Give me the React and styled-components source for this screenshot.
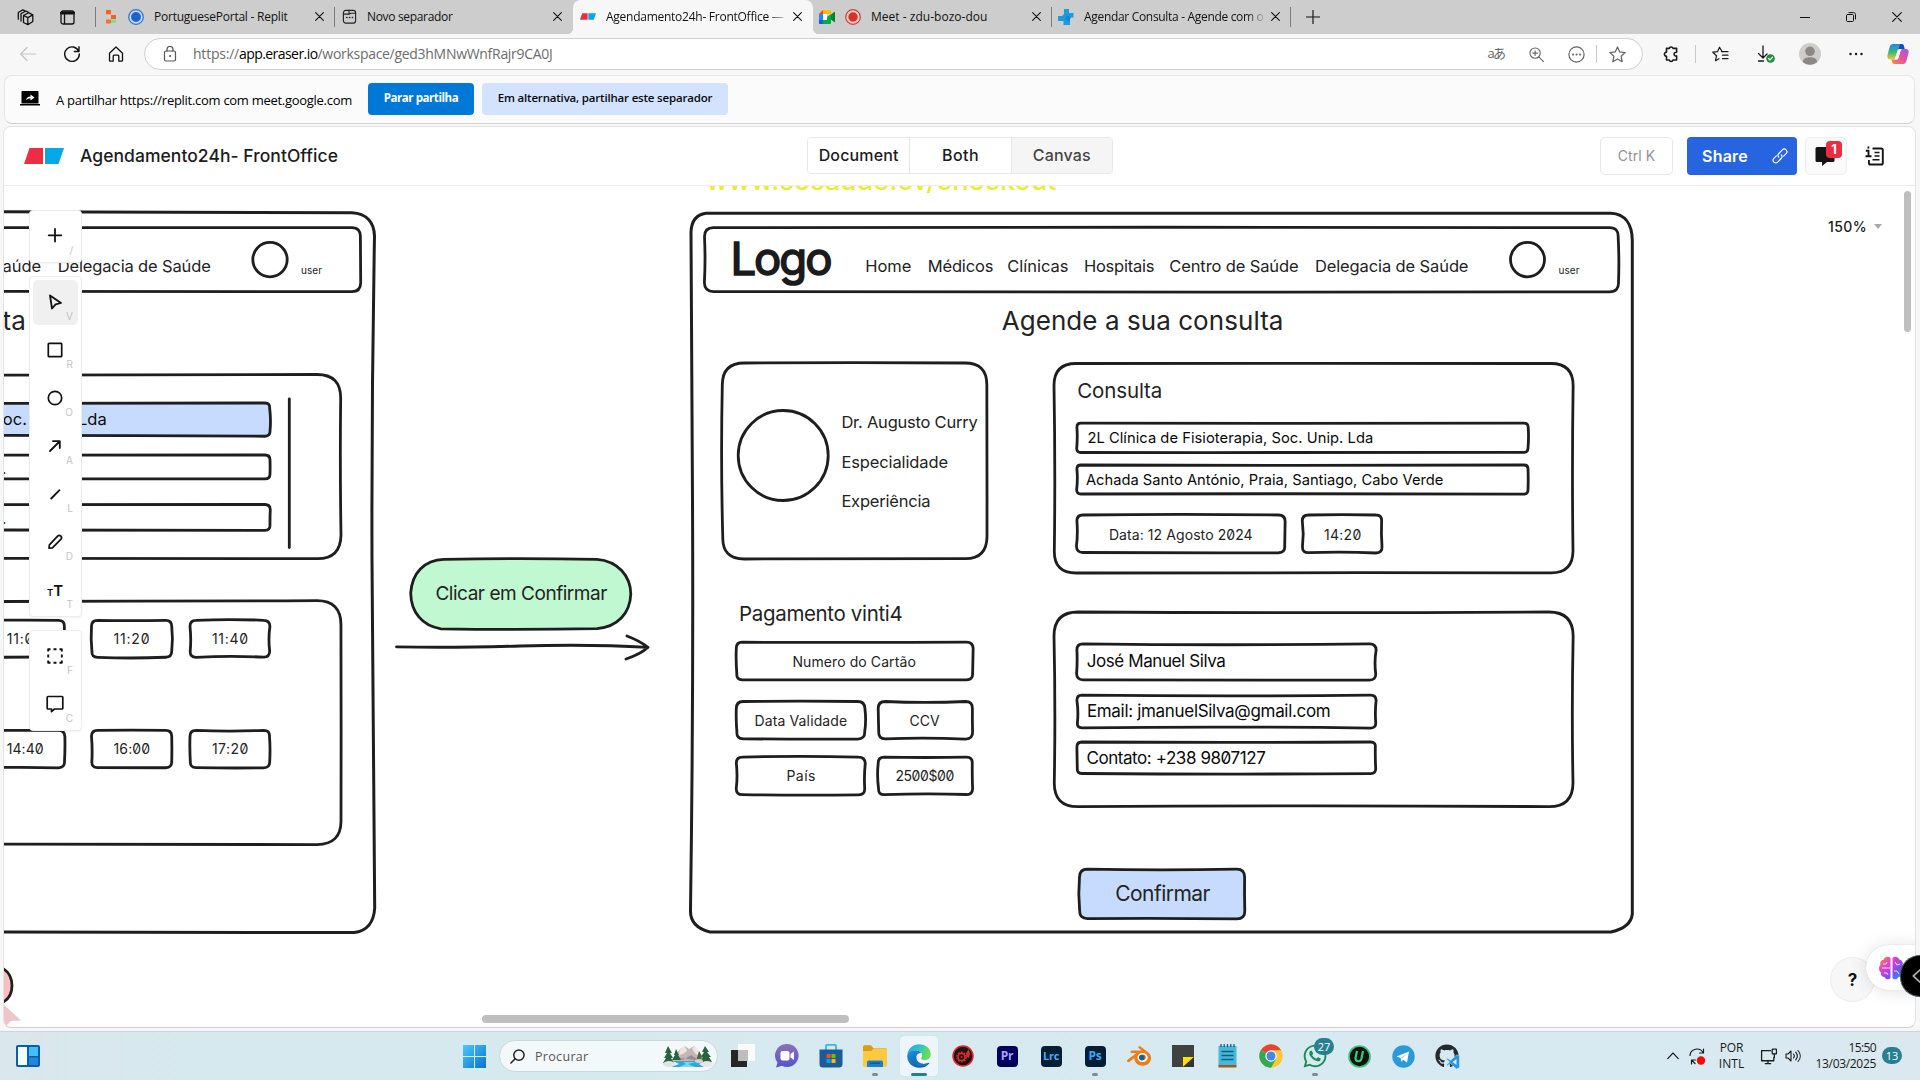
import React, { useLayoutEffect, useRef, useState } from "react";
import styled, { createGlobalStyle, css } from "styled-components";
import { FaWhatsapp, FaGithub } from "react-icons/fa";
import { SiBlender } from "react-icons/si";

const INK = "#1e1e1e";
const UI = `"Open Sans", "Noto Sans", sans-serif`;
const APP = `Inter, "Liberation Sans", sans-serif`;

const Global = createGlobalStyle`
  * { box-sizing: border-box; }
  html, body { margin: 0; padding: 0; }
  body { width: 1920px; height: 1080px; overflow: hidden; background: #f7f7f7; }
`;

/* ---------- text that tracks itself out to a given width ---------- */

const FitSpan = styled.span`
  display: inline-block;
  white-space: pre;
  flex: none;
`;

function Fit({ w, children, className }) {
  const ref = useRef(null);
  const [spacing, setSpacing] = useState(0);
  useLayoutEffect(() => {
    const el = ref.current;
    el.style.letterSpacing = "0px";
    const natural = el.getBoundingClientRect().width;
    setSpacing((w + 1.5 - natural) / String(children).length);
  }, [w, children]);
  return (
    <FitSpan ref={ref} className={className} style={{ letterSpacing: `${spacing}px` }}>
      {children}
    </FitSpan>
  );
}

/* ---------- window frame ---------- */

const Screen = styled.div`
  width: 1920px;
  height: 1080px;
  display: flex;
  flex-direction: column;
  background: #f7f7f7;
  font-family: ${UI};
  color: #111;
  overflow: hidden;
`;

const TabStrip = styled.div`
  height: 34px;
  flex: none;
  display: grid;
  grid-template-columns: 96px 239px 238px 240px 239px 239px 43px 1fr 140px;
  background: #cdcdcd;
`;

const edgeLine = css`
  &::after {
    content: "";
    position: absolute;
    right: 0;
    top: 7px;
    height: 20px;
    width: 1px;
    background: #7d7d7d;
  }
`;

const StripTools = styled.div`
  position: relative;
  display: flex;
  align-items: center;
  gap: 26px;
  padding-left: 17px;
  ${edgeLine}
`;

const Tab = styled.div`
  position: relative;
  display: flex;
  align-items: center;
  gap: 10px;
  padding: 0 10px 1px ${(p) => p.$pad || 6}px;
  font-size: 12px;
  color: #111;
  ${(p) => p.$lined && edgeLine}
  ${(p) =>
    p.$active &&
    css`
      background: #f7f7f7;
      border-radius: 8px 8px 0 0;
      &::before,
      &::after {
        content: "";
        position: absolute;
        bottom: 0;
        width: 6px;
        height: 6px;
      }
      &::before {
        left: -6px;
        background: radial-gradient(circle at 0 0, #cdcdcd 6px, #f7f7f7 6.5px);
      }
      &::after {
        right: -6px;
        background: radial-gradient(circle at 100% 0, #cdcdcd 6px, #f7f7f7 6.5px);
      }
    `}
`;

const TabTitle = styled.div`
  flex: 1;
  min-width: 0;
  margin-right: -5px;
  overflow: hidden;
  line-height: 18px;
  ${(p) => p.$fade && `mask-image: linear-gradient(90deg, #000 calc(100% - 18px), rgba(0, 0, 0, 0.15));`}
`;

const Centered = styled.div`
  display: flex;
  align-items: center;
  justify-content: center;
`;

const WindowButtons = styled.div`
  display: grid;
  grid-template-columns: repeat(3, 46px);
  place-items: center;
  margin-left: 2px;
`;

const AddressRow = styled.div`
  height: 41px;
  flex: none;
  display: flex;
  align-items: center;
  padding-left: 20px;
  padding-bottom: 1px;
`;

const NavButtons = styled.div`
  display: flex;
  gap: 28px;
  margin-right: 20px;
`;

const AddressField = styled.div`
  width: 1499px;
  height: 32px;
  display: flex;
  align-items: center;
  border: 1px solid #cfcfcf;
  border-radius: 16px;
  background: #fff;
  padding: 0 4px 0 18px;
  font-size: 14px;
`;

const Url = styled.div`
  flex: 1;
  display: flex;
  margin-left: 16px;
  color: #6c6c6c;
  line-height: 20px;
`;

const UrlHost = styled(Fit)`color: #000;`;

const Cell = styled.div`
  width: ${(p) => p.$w}px;
  padding-left: ${(p) => p.$pl || 0}px;
  flex: none;
  display: flex;
  align-items: center;
  justify-content: center;
  color: ${(p) => p.$c || "#1a1a1a"};
`;

const LangMark = styled.span`
  font: 13px/1 "Open Sans", "Noto Sans CJK JP", sans-serif;
  letter-spacing: -1.5px;
  margin-bottom: 2px;
`;

const Rule = styled.div`
  width: 1px;
  height: 18px;
  background: #c8c8c8;
`;

const ShareBar = styled.div`
  flex: none;
  height: 49px;
  margin: 0 5px 0 4px;
  display: flex;
  align-items: center;
  padding: 0 0 2px 15px;
  background: #fbfbfb;
  border: 1px solid #e6e6e6;
  border-bottom-color: #d2d2d2;
  border-radius: 8px;
  font-size: 13px;
  color: #000;
`;

const ShareMessage = styled(Fit)`margin: 2px 16px 0 16px;`;

const ShareButton = styled.button`
  width: ${(p) => p.$w}px;
  height: 32px;
  margin-right: 8px;
  padding: 0 0 2px;
  border: 0;
  border-radius: 4px;
  background: ${(p) => (p.$primary ? "#0078d7" : "#d3e2fd")};
  color: ${(p) => (p.$primary ? "#fff" : "#0a0a0a")};
  font: ${(p) => (p.$primary ? 700 : 600)} 11.5px ${UI};
`;

/* ---------- app card ---------- */

const AppCard = styled.main`
  flex: none;
  position: relative;
  height: 902px;
  margin: 2px 4px 0 3px;
  display: flex;
  flex-direction: column;
  background: #fff;
  border: 1px solid #e3e3e3;
  border-bottom-color: #d0d0d0;
  border-radius: 8px;
  overflow: hidden;
  font-family: ${APP};
`;

const AppHeader = styled.header`
  flex: none;
  height: 59px;
  padding-bottom: 1px;
  display: grid;
  grid-template-columns: 803px 306px 1fr;
  align-items: center;
  border-bottom: 1px solid #ececec;
`;

const Brand = styled.div`
  display: flex;
  align-items: center;
  gap: 16px;
  padding-left: 20px;
  font-size: 17.5px;
  font-weight: 450;
  color: #1c1c1c;
`;

const Segments = styled.div`
  display: grid;
  grid-template-columns: repeat(3, 1fr);
  height: 37px;
  border: 1px solid #e8e8e8;
  border-radius: 4px;
  overflow: hidden;
  font-size: 16px;
  font-weight: 500;
`;

const Segment = styled.div`
  display: flex;
  align-items: center;
  justify-content: center;
  padding-bottom: 1px;
  color: ${(p) => (p.$on ? "#444" : "#1c1c1c")};
  background: ${(p) => (p.$on ? "#f5f5f5" : "#fff")};
  & + & { border-left: 1px solid #e8e8e8; }
`;

const HeaderActions = styled.div`
  display: flex;
  align-items: center;
  justify-content: flex-end;
  padding-right: 14px;
`;

const KeyHint = styled.div`
  width: 73px;
  height: 38px;
  margin-right: 14px;
  padding-bottom: 1px;
  display: flex;
  align-items: center;
  justify-content: center;
  border: 1px solid #e8e8e8;
  border-radius: 5px;
  font-size: 14px;
  color: #929292;
`;

const ShareCta = styled.button`
  width: 110px;
  height: 38px;
  padding: 0 9px 0 15px;
  margin-right: 8px;
  display: flex;
  align-items: center;
  justify-content: space-between;
  border: 0;
  border-radius: 4px;
  background: #2765e0;
  color: #fff;
  font: 600 16px ${APP};
`;

const CommentButton = styled.div`
  position: relative;
  width: 42px;
  height: 38px;
  display: flex;
  align-items: center;
  padding-left: 9px;
  background: #fafafa;
  border: 1px solid #efefef;
  border-radius: 5px;
`;

const CommentBadge = styled.span`
  position: absolute;
  left: 20px;
  top: 3px;
  width: 16px;
  height: 17px;
  border-radius: 4px;
  background: #ee2b41;
  color: #fff;
  font-size: 13px;
  font-weight: 700;
  line-height: 17px;
  text-align: center;
`;

const NotesButton = styled.div`
  width: 54px;
  display: flex;
  justify-content: center;
`;

/* ---------- whiteboard ---------- */

const Board = styled.section`
  flex: 1;
  position: relative;
  overflow: hidden;
`;

/* Board coordinates are window coordinates; the plane is shifted to suit. */
const Plane = styled.div`
  position: absolute;
  left: -4px;
  top: -186px;
  width: 1920px;
  height: 1080px;
`;

const Ink = styled.svg`
  position: absolute;
  inset: 0;
  fill: none;
  stroke: ${INK};
  stroke-width: 2.8;
  stroke-linecap: round;
  stroke-linejoin: round;
`;

const LabelBox = styled.div`
  position: absolute;
  left: ${(p) => p.$x - 0.6}px;
  top: ${(p) => p.$y + 0.7 - p.$s * 0.864}px;
  line-height: 1;
  font-size: ${(p) => p.$s}px;
  font-weight: ${(p) => p.$b || 400};
  color: ${(p) => p.$c || "#232323"};
  font-feature-settings: "zero";
  ${(p) => p.$s > 40 && `-webkit-text-stroke: 1.6px currentColor;`}
`;

const Tools = styled.nav`
  position: absolute;
  left: 25px;
  top: 24px;
  display: flex;
  flex-direction: column;
  gap: 13px;
`;

const ToolGroup = styled.div`
  width: 53px;
  padding: 3px;
  display: flex;
  flex-direction: column;
  gap: 3px;
  background: #fff;
  border: 1px solid #ececec;
  border-radius: 4px;
  box-shadow: 0 1px 2px rgba(0, 0, 0, 0.05);
`;

const Tool = styled.div`
  position: relative;
  width: 45px;
  height: 45px;
  padding: 0 1px 1px 0;
  display: flex;
  align-items: center;
  justify-content: center;
  border-radius: 5px;
  background: ${(p) => (p.$on ? "#f0f0f0" : "#fff")};
`;

const ToolKey = styled.span`
  position: absolute;
  right: 5px;
  bottom: 3px;
  font-size: 10px;
  color: #c4c4c4;
`;

const ZoomLevel = styled.div`
  position: absolute;
  right: 33px;
  top: 32px;
  display: flex;
  align-items: center;
  gap: 7px;
  font-size: 14px;
  font-weight: 500;
  color: #1a1a1a;
`;

const Caret = styled.span`
  border: 4.5px solid transparent;
  border-top: 5px solid #a9a9a9;
  border-bottom: 0;
`;

const ScrollThumb = styled.div`
  position: absolute;
  border-radius: 4px;
  background: #bfbfbf;
  ${(p) =>
    p.$vertical
      ? css`right: 4px; top: 5px; width: 7px; height: 141px;`
      : css`left: 478px; bottom: 4px; width: 367px; height: 8px;`}
`;

const HelpButton = styled.div`
  position: absolute;
  right: 40px;
  bottom: 25px;
  width: 45px;
  height: 45px;
  display: flex;
  align-items: center;
  justify-content: center;
  border: 1px solid #ececec;
  border-radius: 50%;
  background: #f7f7f7;
  font-size: 17px;
  font-weight: 700;
  color: #111;
`;

const SideWidget = styled.div`
  position: absolute;
  right: -21px;
  bottom: 37px;
  width: 70px;
  height: 45px;
  padding-left: 13px;
  display: flex;
  align-items: center;
  border-radius: 23px;
  background: #fff;
  box-shadow: 0 1px 18px rgba(0, 0, 0, 0.12), 0 0 1px rgba(0, 0, 0, 0.2);
`;

const SideHandle = styled.div`
  position: absolute;
  z-index: 2;
  left: 1900px;
  top: 955px;
  width: 20px;
  height: 42px;
  display: flex;
  align-items: center;
  padding-left: 11px;
  border-radius: 21px 0 0 21px;
  border: 1px solid #44535a;
  border-right: 0;
  background: #000;
`;

/* ---------- taskbar ---------- */

const Taskbar = styled.footer`
  height: 49px;
  margin-top: auto;
  flex: none;
  display: flex;
  align-items: center;
  border-top: 1px solid #c9d7dc;
  background: linear-gradient(90deg, #dae7ec 0, #d5e9ef 12%, #d7eaf1 85%, #dbe8f0 100%);
`;

const WidgetSlot = styled.div`
  width: 452px;
  padding-left: 16px;
  display: flex;
`;

const SearchBox = styled.div`
  width: 219px;
  height: 32px;
  margin: 0 3px;
  padding: 0 4px 0 10px;
  display: flex;
  align-items: center;
  gap: 10px;
  border: 1px solid #c9d9df;
  border-radius: 16px;
  background: #f3f9fb;
  font-size: 12.5px;
  color: #555;
`;

const SearchText = styled.div`flex: 1;`;

const TaskCell = styled.div`
  position: relative;
  width: 44px;
  height: 40px;
  display: flex;
  align-items: center;
  justify-content: center;
  &::before {
    content: "";
    position: absolute;
    z-index: 0;
    inset: 0 3px;
    border-radius: 4px;
    background: ${(p) => (p.$active ? "#edf5fb" : "transparent")};
    box-shadow: ${(p) => (p.$active ? "0 0 1px #9db" : "none")};
  }
  & > svg { position: relative; }
  &::after {
    content: "";
    position: absolute;
    bottom: 0.5px;
    width: ${(p) => (p.$active ? 16 : p.$open ? 6 : 0)}px;
    height: 3px;
    border-radius: 2px;
    background: ${(p) => (p.$active ? "#23808f" : "#838b90")};
  }
`;

const CountBadge = styled.span`
  position: absolute;
  left: 21px;
  top: 2px;
  min-width: 20px;
  height: 17px;
  border-radius: 9px;
  background: #277f90;
  color: #fff;
  font-size: 11px;
  line-height: 17px;
  text-align: center;
`;

const AdobeTile = styled.div`
  width: 21px;
  height: 21px;
  border-radius: 4px;
  background: ${(p) => p.$bg};
  color: ${(p) => p.$c};
  font: 700 ${(p) => p.$s || 12}px/20px ${UI};
  text-align: center;
  letter-spacing: -0.3px;
`;

const Tray = styled.div`
  margin-left: auto;
  padding-right: 18px;
  display: flex;
  align-items: center;
  font-size: 12px;
  color: #1a1a1a;
`;

const TwoLine = styled.div`
  width: ${(p) => p.$w}px;
  display: flex;
  flex-direction: column;
  align-items: ${(p) => p.$align};
  line-height: 16px;
`;

const DayBadge = styled.div`
  width: 20px;
  height: 17px;
  margin: 0 0 1px 6px;
  border-radius: 9px;
  background: #277f90;
  color: #fff;
  font-size: 11px;
  line-height: 17px;
  text-align: center;
`;

/* ---------- icons ---------- */

function Glyph({ s = 16, h, vb, sw = 1.2, fill = "none", stroke = "currentColor", children }) {
  return (
    <svg
      width={s}
      height={h || s}
      viewBox={vb || "0 0 16 16"}
      fill={fill}
      stroke={stroke}
      strokeWidth={sw}
      strokeLinecap="round"
      strokeLinejoin="round"
    >
      {children}
    </svg>
  );
}

const Cross = ({ s = 9 }) => (
  <Glyph s={s} vb="0 0 10 10" sw={1.2} stroke="#111"><path d="M.7.7l8.6 8.6M9.3.7L.7 9.3" /></Glyph>
);

const EraserMark = ({ w, h }) => (
  <svg width={w} height={h} viewBox="0 0 40 16">
    <path d="M5.5 0H19v16H0z" fill="#ee2c43" />
    <path d="M21 0h19l-5.5 16H21z" fill="#04a8e6" />
  </svg>
);

const Mountain = () => (
  <svg width="50" height="24" viewBox="0 0 50 24">
    <path d="M8 18l9-13 5-3 4 3 5-3 12 15z" fill="#c5b5b4" />
    <path d="M17 5l5-3 2 5-4 3-4 1zM29 4l3-2 6 8-4 1-3-3z" fill="#eee5e3" />
    <path d="M12 13l8 3 8-5 9 6z" fill="#9a8c95" />
    <path d="M10 17h32l-6 3 5 3H8l8-3z" fill="#2da9d3" />
    <path d="M20 18h13l-8 2 7 3H16l7-3z" fill="#7cd7ec" />
    <path d="M5 2l4 7H7l3 5H8l3 5H0l3-5H1l3-5H2zM13 5l3 6h-1l3 5H9l3-5h-1z" fill="#28633f" />
    <path d="M42 2l4 6h-2l4 5h-2l3 5H37l3-5h-2l3-5h-2z" fill="#28633f" />
    <path d="M36 7l3 5-1 5h-5zM4 17h2v3H4zM42 17h2v3h-2z" fill="#4d6a3d" />
    <ellipse cx="6" cy="20" rx="6" ry="3" fill="#e1e2e2" />
    <ellipse cx="44" cy="20" rx="6" ry="3" fill="#e8e6e5" />
    <ellipse cx="36" cy="17" rx="4" ry="2" fill="#d3d0d3" />
  </svg>
);

const EdgeLogo = () => (
  <svg width="24" height="24" viewBox="0 0 24 24">
    <defs>
      <linearGradient id="edgeA" x1="0" y1="0" x2="1" y2=".3"><stop offset="0" stopColor="#2ba8df" /><stop offset=".55" stopColor="#31c4c1" /><stop offset="1" stopColor="#69df4f" /></linearGradient>
      <linearGradient id="edgeB" x1="0" y1="0" x2="1" y2="1"><stop offset="0" stopColor="#2194dd" /><stop offset="1" stopColor="#0a4a9c" /></linearGradient>
    </defs>
    <path d="M.3 11C1 4.5 6 .3 12 .3c7 0 11.700 5 11.700 9.700 0 4-3 6-6 6-2.500 0-3.900-.9-3.600-1.500.5-.9 1-1.400 1-2.900 0-3-3-5.300-6.500-5.300C4.500 6.300 1.500 8.500.3 11z" fill="url(#edgeA)" />
    <path d="M.3 11.500C1 8 5 6.100 8.700 6.300c2.500.2 4.500 1.200 5.500 2.700-1-.3-4.200.3-4.900 3.500-.8 4 3 7.500 7.500 7.500 2.200 0 3.800-.6 5-1.200.4-.2.7.2.4.6C20 22.200 16.500 23.700 12.300 23.700 5 23.700-.3 18 .3 11.500z" fill="url(#edgeB)" />
    <path d="M9.300 12.500c-.8 4 3 7.500 7.500 7.500 2.200 0 3.800-.6 5-1.200-4 4.500-9.500 4.800-12.500 1.700-3-3-2-7 0-8z" fill="#1575c9" />
  </svg>
);

const ChromeLogo = () => (
  <svg width="24" height="24" viewBox="0 0 24 24">
    <circle cx="12" cy="12" r="11.700" fill="#fcc934" />
    <path d="M12 12L1.900 6.100A11.700 11.700 0 0 1 22.100 6.200H12z" fill="#ea4335" />
    <path d="M1.900 6.100A11.700 11.700 0 0 0 12 23.700l5-8.800L12 12z" fill="#34a853" />
    <circle cx="12" cy="12" r="5.700" fill="#fff" />
    <circle cx="12" cy="12" r="4.500" fill="#4285f4" />
  </svg>
);

const CopilotLogo = () => (
  <svg width="22" height="20" viewBox="0 0 22 20">
    <defs>
      <linearGradient id="copA" x1="0" y1="0" x2="0" y2="1"><stop offset="0" stopColor="#1f8de8" /><stop offset=".5" stopColor="#36b37e" /><stop offset="1" stopColor="#f6c928" /></linearGradient>
      <linearGradient id="copB" x1="1" y1="0" x2="0" y2="1"><stop offset="0" stopColor="#9a5bf0" /><stop offset=".5" stopColor="#e8529b" /><stop offset="1" stopColor="#fd8d3c" /></linearGradient>
    </defs>
    <path d="M6 0h8.500c1.500 0 2 .8 2.500 2.500L17.500 5H13c-1.500 0-2 .6-2.500 2L8.500 13c-.6 1.600-1 2.500-2.600 2.500H3.500C1 15.500 0 14 .5 11L2.500 3.500C3.100 1 4 0 6 0z" fill="url(#copA)" />
    <path d="M13 0h1.500c1.500 0 2 .8 2.500 2.500l.6 2.700H13c-.5 0-1.400.3-1.800.8z" fill="#1748c9" />
    <path d="M16 20H7.500C6 20 5.500 19.200 5 17.500l-.6-2H9c1.500 0 2-.6 2.500-2l2-6.500c.6-1.600 1-2 2.600-2h2.400c2.500 0 3.500 1 3 4l-2 7.500C18.900 19 18 20 16 20z" fill="url(#copB)" />
    <path d="M10.500 7l-2 6.300c-.3.900-.6 1.700-1.200 2.200H9c1.500 0 2-.6 2.500-2L13.300 7.500c.4-1.200.8-2 1.500-2.400H13c-1.500 0-2 .5-2.500 1.900z" fill="#fff" />
  </svg>
);

const MeetLogo = () => (
  <svg width="16" height="14" viewBox="0 0 16 14">
    <path d="M0 4l4-4v4z" fill="#ea4335" />
    <path d="M4 0h7c.8 0 1 .3 1 1v3H4z" fill="#fbbc04" />
    <path d="M0 4h4v6H0z" fill="#2684fc" />
    <path d="M0 10h4v4H1c-.7 0-1-.3-1-1z" fill="#0066da" />
    <path d="M4 10h4V7l4-3v9c0 .7-.3 1-1 1H4z" fill="#00ac47" />
    <path d="M12 4.500L15.200 2c.5-.3.800-.1.800.4v9.200c0 .5-.3.700-.8.4L12 9.500z" fill="#00832d" />
    <path d="M4 4h4v6H4z" fill="#fff" />
  </svg>
);

const TOOL_ICONS = {
  plus: <Glyph s={16} sw={1.8}><path d="M8 1v12.600M1.700 7.300h12.600" /></Glyph>,
  select: <Glyph s={16} sw={1.8}><path d="M3 1.500l11 7.500-5.400 1.400L5 14.500z" /></Glyph>,
  rect: <Glyph s={16} sw={1.7}><rect x="1.300" y="1.300" width="13.400" height="13.400" rx=".8" /></Glyph>,
  ellipse: <Glyph s={16} sw={1.7}><circle cx="8" cy="8" r="6.700" /></Glyph>,
  arrow: <Glyph s={16} sw={1.8}><path d="M3 13l9.500-9.500M6 3.200h6.800V10" /></Glyph>,
  line: <Glyph s={16} sw={1.8}><path d="M4.200 12.500l8.300-8.300" /></Glyph>,
  draw: <Glyph s={16} sw={1.7}><path d="M2 14.200l.4-3.400 8.200-8.600a2.200 2.200 0 0 1 3.200 3.200l-8.400 8.400z" /></Glyph>,
  frame: <Glyph s={16} sw={1.9}><path d="M1.200 3.500V1.200h2.300M6.500 1.200h3M12.500 1.200h2.300v2.300M14.800 6.500v3M14.800 12.500v2.300h-2.300M9.500 14.800h-3M3.500 14.800H1.200v-2.300M1.200 9.500v-3" strokeLinecap="butt" /></Glyph>,
  comment: <Glyph s={18} vb="0 0 18 18" sw={1.7}><path d="M2 1.500h14c.5 0 .8.300.8.800v10.900c0 .5-.3.800-.8.800H8.500L5.500 16.700V14H2c-.5 0-.8-.3-.8-.8V2.300c0-.5.300-.8.8-.8z" /></Glyph>,
};

const TextIcon = styled.span`
  font: 600 ${(p) => p.$s}px/1 ${APP};
  color: #111;
`;
const TextTool = styled.span`
  display: flex;
  align-items: baseline;
`;

const TOOL_GROUPS = [
  [["plus", "/"]],
  [["select", "V"], ["rect", "R"], ["ellipse", "O"], ["arrow", "A"], ["line", "L"], ["draw", "D"], ["text", "T"]],
  [["frame", "F"], ["comment", "C"]],
];

/* ---------- sketch outlines ---------- */

const jitter = (seed, k) => {
  const v = Math.sin(seed * 12.9898 + k * 78.233) * 43758.5453;
  return (v - Math.floor(v)) * 2 - 1;
};

function sketchRect([x1, y1, x2, y2, r, amp = 1.2]) {
  const seed = x1 + y1 * 1.7;
  const mx = (x1 + x2) / 2;
  const my = (y1 + y2) / 2;
  const j = (k) => jitter(seed, k) * amp;
  return [
    `M${x1 + r} ${y1}`,
    `Q${mx} ${y1 + j(1) * 1.6} ${x2 - r} ${y1}`,
    `Q${x2} ${y1} ${x2 + j(2) * 0.5} ${y1 + r}`,
    `Q${x2 + j(3) * 1.5} ${my} ${x2} ${y2 - r}`,
    `Q${x2 + j(4) * 0.4} ${y2} ${x2 - r} ${y2 + j(4) * 0.3}`,
    `Q${mx} ${y2 + j(5) * 1.6} ${x1 + r} ${y2}`,
    `Q${x1} ${y2} ${x1 + j(6) * 0.5} ${y2 - r}`,
    `Q${x1 + j(7) * 1.5} ${my} ${x1} ${y1 + r}`,
    `Q${x1} ${y1} ${x1 + r} ${y1}Z`,
  ].join("");
}

/* The two big frames bow inwards along their long sides. */
const LEFT_FRAME = "M-100 211.500L352 212.700C366 213.500 374 222 374.500 236Q371.500 400 372 560T374.700 908C374 922 367 931 354 932.500L-100 932";
const RIGHT_FRAME =
  "M706 213.300L1611 213.300C1625 214 1632 224 1632.300 240Q1631.500 570 1632.300 914C1631 926 1620 930 1611 932L710 932C698 929 690 922 690.500 910Q693.500 700 692.500 500T691 232C691.500 220 697 214.500 706 213.300Z";

const BLUE = "#c6dbfd";

const SHAPES = [
  { r: [-580, 227.7, 360.7, 291.7, 9, 0.8] },
  { r: [-400, 374.5, 341, 559, 24, 1] },
  { r: [-300, 403, 270, 436, 5, 1], fill: BLUE },
  { r: [-300, 455, 270, 479, 5, 0.4] },
  { r: [-300, 504.5, 270, 530.3, 5, 0.7] },
  { r: [-400, 600.7, 341, 844.3, 24, 1] },
  { r: [-15, 620.3, 64.5, 657.3, 6] },
  { r: [91.5, 620.3, 171.7, 657.3, 6] },
  { r: [190, 620.3, 269.700, 657.3, 6] },
  { r: [-15, 730.3, 64.5, 767.6, 6] },
  { r: [91.5, 730.3, 171.7, 767.6, 6] },
  { r: [190, 730.3, 269.700, 767.6, 6] },
  { r: [704.5, 227.6, 1618.5, 291.6, 9, 0.8] },
  { r: [722.3, 363, 987, 559, 22] },
  { r: [1054, 363.5, 1573, 573, 22] },
  { r: [1076.9, 423.2, 1528, 452.5, 4, 1] },
  { r: [1076.9, 465, 1528, 494, 4, 1] },
  { r: [1076.9, 515, 1284.700, 552.5, 6] },
  { r: [1302.3, 515, 1382, 552.7, 6] },
  { r: [736.3, 642.2, 972.6, 679.8, 6] },
  { r: [736.3, 701.5, 864.700, 738.8, 7] },
  { r: [878.2, 701.5, 972.6, 738.8, 7] },
  { r: [736.3, 757.2, 864.700, 794.7, 6] },
  { r: [878.2, 757.2, 972.6, 794.7, 6] },
  { r: [1054, 612, 1573, 806.7, 24, 1.4] },
  { r: [1076.9, 643.8, 1375.700, 679.8, 6] },
  { r: [1076.9, 695.2, 1375.700, 727.8, 5] },
  { r: [1076.9, 742, 1375.700, 773.5, 5] },
  { r: [1079.5, 869.2, 1244.8, 918.6, 8, 1], fill: BLUE },
];

/* x, baseline, ink width, size, text, weight, colour */
const LABELS = [
  [706.5, 189.2, 349, 27, "www.sosaude.cv/checkout", 500, "#ecec2c"],
  [-87.7, 271.3, 127.7, 16.5, "Centro de Saúde"],
  [58.3, 271.3, 151.5, 16.5, "Delegacia de Saúde"],
  [301.5, 273, 19.8, 10, "user"],
  [-255, 329.3, 280, 26, "Agende a sua consulta"],
  [-215, 425, 321, 16.5, "2L Clínica de Fisioterapia, Soc. Unip. Lda", 400, "#0c0c0c"],
  [-80, 473, 84, 15, "Soc. Unip. Lda."],
  [-80, 523, 84, 15, "Soc. Unip. Lda."],
  [7.3, 643, 35.5, 14, "11:00"],
  [114, 643, 35.5, 14, "11:20"],
  [212.5, 643, 35.5, 14, "11:40"],
  [7.3, 753.3, 35.5, 14, "14:40"],
  [114, 753.3, 35.5, 14, "16:00"],
  [212.5, 753.3, 35.5, 14, "17:20"],
  [436, 600, 170, 19, "Clicar em Confirmar"],
  [731, 275, 98.5, 45.5, "Logo", 400, "#1b1b1b"],
  [865.8, 271.3, 44.7, 16.5, "Home"],
  [928.3, 271.3, 64, 16.5, "Médicos"],
  [1007.8, 271.3, 59.7, 16.5, "Clínicas"],
  [1084.5, 271.3, 68.8, 16.5, "Hospitais"],
  [1169.9, 271.3, 127.7, 16.5, "Centro de Saúde"],
  [1315.5, 271.3, 152, 16.5, "Delegacia de Saúde"],
  [1559, 273, 19.8, 10, "user"],
  [1002.3, 329.5, 280.3, 26, "Agende a sua consulta"],
  [842, 427.3, 134.6, 16.5, "Dr. Augusto Curry"],
  [842, 467.5, 105, 16.5, "Especialidade"],
  [842, 507, 87.5, 16.5, "Experiência"],
  [1077.8, 398, 83.4, 20.5, "Consulta"],
  [1088, 443, 284.4, 14.7, "2L Clínica de Fisioterapia, Soc. Unip. Lda", 400, "#080808"],
  [1086.5, 484.7, 356, 14.7, "Achada Santo António, Praia, Santiago, Cabo Verde", 400, "#080808"],
  [1109.5, 539, 142.3, 14, "Data: 12 Agosto 2024"],
  [1324.6, 539, 36, 14, "14:20"],
  [739.7, 621, 161.7, 20.5, "Pagamento vinti4"],
  [793, 666, 122, 14, "Numero do Cartão"],
  [755, 725.2, 91.5, 14, "Data Validade"],
  [910, 725.2, 29, 14, "CCV"],
  [787, 780.7, 28, 14, "País"],
  [896, 780.7, 57, 14, "2500$00"],
  [1087.3, 666.7, 137.2, 17, "José Manuel Silva", 400, "#0a0a0a"],
  [1087.5, 717, 242, 17, "Email: jmanuelSilva@gmail.com", 400, "#0a0a0a"],
  [1087, 764, 177.5, 17, "Contato: +238 9807127", 400, "#0a0a0a"],
  [1115.8, 900.6, 93.2, 21, "Confirmar"],
];

function Whiteboard() {
  return (
    <Plane>
      <Ink viewBox="0 0 1920 1080" width="1920" height="1080">
        <path d={LEFT_FRAME} strokeWidth="3" />
        <path d={RIGHT_FRAME} strokeWidth="3" />
        {SHAPES.map((s, i) => <path key={i} d={sketchRect(s.r)} fill={s.fill || "none"} />)}
        <circle cx="270" cy="259.600" r="17.200" />
        <ellipse cx="1527.500" cy="259.600" rx="17" ry="17.200" />
        <circle cx="783.200" cy="455.500" r="45" />
        <path d="M289.300 399v148.500" />
        <path
          d="M444 559.300Q520 558 597 559.300C618 561 630.500 576 630.800 594C630 613 618 627 597 628.600Q520 630 441 628.800C422 626 411 612 410.700 593C412 573 424 560 444 559.300Z"
          fill="#c0f8d1"
        />
        <path d="M396.500 646.800Q450 648 520 646T648 647.300M627 636Q640 641 648 647.300Q641 654 626 659" />
        <path d="M-30 962C0 962 12 970 12 985.700S0 1008 -30 1008" fill="#f9bfc0" />
        <path d="M1 1002L21 1020.500 11 1021 4 1028Z" fill="#efc6c8" stroke="none" />
      </Ink>
      {LABELS.map(([x, y, w, s, t, b, c], i) => (
        <LabelBox key={i} $x={x} $y={y} $s={s} $b={b} $c={c}>
          <Fit w={w}>{t}</Fit>
        </LabelBox>
      ))}
    </Plane>
  );
}

/* ---------- page ---------- */

const TASKS = [
  { icon: <svg width="24" height="24" viewBox="0 0 24 24"><path d="M0 6h16v17H0z" fill="#262626" /><path d="M7 0h17v17H7z" fill="#fafafa" /><path d="M7 6h10v11H7z" fill="#bdbdbd" /></svg> },
  { icon: <svg width="24" height="24" viewBox="0 0 24 24"><defs><linearGradient id="tm" x2="0" y2="1"><stop stopColor="#8f6fb8" /><stop offset="1" stopColor="#5355cc" /></linearGradient></defs><path d="M12 0a11.500 11.500 0 1 1-5 21.800L1 23.500l1.500-5A11.500 11.500 0 0 1 12 0z" fill="url(#tm)" /><rect x="5.500" y="7" width="9" height="9.500" rx="2" fill="#fff" /><path d="M15.500 10l3.500-2.500v8.500l-3.500-2.500z" fill="#fff" /></svg> },
  { icon: <svg width="24" height="24" viewBox="0 0 24 24"><path d="M7 6V2c0-.8.400-1.200 1.200-1.200h7.600c.8 0 1.200.4 1.200 1.200v4" fill="none" stroke="#35b7ee" strokeWidth="1.800" /><path d="M.5 5.500h23V20c0 2.500-1 3.500-3.500 3.500H4C1.500 23.500.5 22.500.5 20z" fill="#1b5c96" /><path d="M7.500 10h4v4h-4z" fill="#f25022" /><path d="M12.500 10h4v4h-4z" fill="#7fba00" /><path d="M7.500 15h4v4h-4z" fill="#00a4ef" /><path d="M12.500 15h4v4h-4z" fill="#ffb900" /></svg> },
  { open: true, icon: <svg width="24" height="23" viewBox="0 0 24 23"><path d="M0 2C0 .8.700.2 1.700.2H8l2.500 3H22c1.300 0 2 .6 2 2V10H0z" fill="#dd9b12" /><path d="M0 6h8l3-2.500h11c1.300 0 2 .7 2 2V20c0 1.200-.8 2-2 2H2c-1.200 0-2-.8-2-2z" fill="#fcca40" /><path d="M4 22v-4.500c0-1.300.7-2 2-2h12c1.300 0 2 .7 2 2V22z" fill="#1b7fd0" /><path d="M7.500 18.300h9" stroke="#0c5ba0" strokeWidth="1.600" strokeLinecap="round" /></svg> },
  { active: true, icon: <EdgeLogo /> },
  { icon: <svg width="22" height="22" viewBox="0 0 22 22"><circle cx="11" cy="11" r="10" fill="#161616" stroke="#e4262b" strokeWidth="1.500" /><circle cx="9.500" cy="12" r="4.600" fill="none" stroke="#e4262b" strokeWidth="1.600" strokeDasharray="1.900 1" /><circle cx="9.500" cy="12" r="3.400" fill="none" stroke="#e4262b" strokeWidth="1.500" /><circle cx="9.500" cy="12" r="1" fill="#e4262b" /><path d="M14 8.500l2.500-4.500 1.500 4.500-1 4.500-2-1z" fill="#e4262b" /></svg> },
  { icon: <AdobeTile $bg="#00005c" $c="#a5a0ff">Pr</AdobeTile> },
  { icon: <AdobeTile $bg="#041e34" $c="#4babf5" $s={11}>Lrc</AdobeTile> },
  { open: true, icon: <AdobeTile $bg="#041e34" $c="#35a9fb">Ps</AdobeTile> },
  { icon: <svg width="24" height="24" viewBox="0 0 24 24"><circle cx="15" cy="13.800" r="6" fill="#fff" /><SiBlender size={24} color="#ea7f1a" /><circle cx="14.800" cy="13.600" r="2.800" fill="#1e5a95" /></svg> },
  { icon: <svg width="22" height="22" viewBox="0 0 22 22"><path d="M0 0h22v12l-9 10H0z" fill="#414141" /><path d="M11 22V12h11z" fill="#ffe000" /><path d="M22 12v10H11z" fill="#333" /></svg> },
  { icon: <svg width="19" height="24" viewBox="0 0 19 24"><path d="M.5 2h18v20h-18z" fill="#45b9da" /><path d="M.5 21h18v2.500h-18z" fill="#a65a18" /><path d="M3 0v3M6.200 0v3M9.500 0v3M12.800 0v3M16 0v3" stroke="#27566a" strokeWidth="1.300" /><path d="M3.500 7.500h12M3.500 11.500h12M3.500 15.500h12" stroke="#155a7c" strokeWidth="1.500" /></svg> },
  { icon: <ChromeLogo /> },
  { open: true, badge: "27", icon: <FaWhatsapp size={26} color="#1f8a58" /> },
  { icon: <svg width="23" height="23" viewBox="0 0 23 23"><circle cx="11.500" cy="11.500" r="10.500" fill="#0e1410" stroke="#3ec47a" strokeWidth="1.700" /><path d="M9 6l-1.500 7c-.5 4 5 4.500 6 .5L15 6" fill="none" stroke="#43c67c" strokeWidth="2.200" /></svg> },
  { icon: <svg width="23" height="23" viewBox="0 0 23 23"><circle cx="11.500" cy="11.500" r="11.200" fill="#2a9bd8" /><path d="M4.500 11.500l12.500-5-2 11-3.800-2.800-2 2-.5-3.700z" fill="#fff" /><path d="M8.700 13l6-4.500-4.200 5z" fill="#a9cfe6" /></svg> },
  { icon: <svg width="25" height="25" viewBox="0 0 25 25"><FaGithub size={24} color="#24292e" /><path d="M24.500 11.500v12l-3 1.500-6-5.500-3 2.300-1-.8 3-3-3-3 1-.8 3 2.300 6-5.500z" fill="#2496e3" stroke="#d7eaf1" strokeWidth=".5" /><path d="M21.500 15v6l-4-3z" fill="#d7eaf1" /></svg> },
];

export default function App() {
  return (
    <Screen>
      <Global />
      <TabStrip>
        <StripTools>
          <Glyph s={17} sw={1.3} stroke="#111" vb="0 0 17 17"><path d="M6.500 6.500l5-2.800 4.300 2.200v6.600l-5 3.200-4.300-2.200zM6.500 6.500l4.300 2.100v7.100M10.800 8.600l5-2.700M4 12V4.800L8.800 2l2 .9M1.300 10.200V3.500L5.800.9l1.700.7" /></Glyph>
          <Glyph s={15} sw={1.3} stroke="#111" vb="0 0 15 15"><rect x="1" y="1" width="13" height="13" rx="2" /><path d="M1.500 3h12" strokeWidth="3" /><path d="M4.500 3v10.500" /></Glyph>
        </StripTools>
        <Tab $lined $pad={9}>
          <svg width="13" height="14" viewBox="0 0 13 14"><path d="M1 0h5v4.200H1zM6 5h5v4H6z" fill="#f0641e" /><path d="M1 9.500h5v4H1z" fill="#f0742e" /><path d="M6 9.500h5v3.500H6z" fill="#7fdc9a" /></svg>
          <svg width="16" height="16" viewBox="0 0 16 16"><circle cx="8" cy="8" r="7.300" fill="#cdd9ee" stroke="#2a6fd2" strokeWidth="1.200" /><circle cx="8" cy="8" r="4.900" fill="#1b63d0" /></svg>
          <TabTitle><Fit w={132}>PortuguesePortal - Replit</Fit></TabTitle>
          <Cell $w={12}><Cross /></Cell>
        </Tab>
        <Tab $pad={7}>
          <Glyph s={15} sw={1.2} stroke="#222"><rect x="1.500" y="1.500" width="13" height="13.500" rx="2.500" /><path d="M1.500 5.500h6l2-1h5M7.500 1.500v4" /><path d="M5 9h.2M8 9h.2M11 9h.2" strokeWidth="1.700" /></Glyph>
          <TabTitle><Fit w={84}>Novo separador</Fit></TabTitle>
          <Cell $w={12}><Cross /></Cell>
        </Tab>
        <Tab $active $pad={7}>
          <EraserMark w={16} h={7} />
          <TabTitle $fade><Fit w={176}>Agendamento24h- FrontOffice —</Fit></TabTitle>
          <Cell $w={12}><Cross /></Cell>
        </Tab>
        <Tab $lined>
          <MeetLogo />
          <svg width="16" height="16" viewBox="0 0 16 16"><circle cx="8" cy="8" r="7.300" fill="#e2cfcd" stroke="#d93a30" strokeWidth="1.200" /><circle cx="8" cy="8" r="4.700" fill="#d93025" /></svg>
          <TabTitle><Fit w={115}>Meet - zdu-bozo-dou</Fit></TabTitle>
          <Cell $w={12}><Cross /></Cell>
        </Tab>
        <Tab $lined>
          <svg width="16" height="16" viewBox="0 0 16 16"><path d="M6 0h5v4h4.500v4.500H12V16H5.500v-4H0V7h4l2-2z" fill="#1d9be0" /><path d="M9 6l4 2-2 5-4-3z" fill="#1787cb" /></svg>
          <TabTitle $fade><Fit w={178}>Agendar Consulta - Agende com o</Fit></TabTitle>
          <Cell $w={12}><Cross /></Cell>
        </Tab>
        <Centered><Glyph s={14} sw={1.3} stroke="#111"><path d="M8 0v16M0 8h16" /></Glyph></Centered>
        <span />
        <WindowButtons>
          <Glyph s={10} vb="0 0 10 10" sw={1.2} stroke="#111"><path d="M0 5.500h10" /></Glyph>
          <Glyph s={10} vb="0 0 10 10" sw={1} stroke="#111"><rect x=".5" y="2.500" width="7" height="7" rx="1" /><path d="M3 .6h4.500c1.300 0 2 .7 2 2V7" /></Glyph>
          <Cross s={10} />
        </WindowButtons>
      </TabStrip>

      <AddressRow>
        <NavButtons>
          <Glyph s={16} stroke="#c3c3c3"><path d="M15.500 8H1M7 1.500L.7 8 7 14.500" /></Glyph>
          <Glyph s={16} stroke="#111" sw={1.4}><path d="M14.800 5.500A7.300 7.300 0 1 0 15.300 8M15 .8v4.700h-4.700" /></Glyph>
          <Glyph s={16} stroke="#111" sw={1.3}><path d="M1.500 7.200L8 1l6.500 6.200v7.300c0 .4-.3.700-.7.700h-3V10c0-.6-.3-.9-.9-.9H6.100c-.6 0-.9.3-.9.9v5.200h-3c-.4 0-.7-.3-.7-.7z" /></Glyph>
        </NavButtons>
        <AddressField>
          <Glyph s={14} h={16} vb="0 0 14 16" stroke="#555"><rect x="1.500" y="5" width="11" height="10" rx="1.500" /><path d="M4 5V3.500a3 3 0 0 1 6 0V5" /><path d="M7 10h.1" strokeWidth="2" /></Glyph>
          <Url>
            <Fit w={44.5}>https://</Fit>
            <UrlHost w={77}>app.eraser.io</UrlHost>
            <Fit w={233.5}>/workspace/ged3hMNwWnfRajr9CA0J</Fit>
          </Url>
          <Cell $w={40} $c="#666"><LangMark>aあ</LangMark></Cell>
          <Cell $w={40} $c="#666"><Glyph s={15}><circle cx="6.500" cy="6.500" r="5.500" /><path d="M10.500 10.500l5 5M4 6.500h5M6.500 4v5" /></Glyph></Cell>
          <Cell $w={40} $c="#666"><Glyph s={17} vb="0 0 17 17"><circle cx="8.500" cy="8.500" r="7.600" /><path d="M5 8.500h.2M8.500 8.500h.2M12 8.500h.2" strokeWidth="1.900" /></Glyph></Cell>
          <Rule />
          <Cell $w={41} $c="#666"><Glyph s={17}><path d="M8 .9l2.100 4.700 5.100.6-3.800 3.500 1 5.100L8 12.200l-4.400 2.600 1-5.100L.8 6.200l5.100-.6z" /></Glyph></Cell>
        </AddressField>
        <Cell $w={52} $pl={4}><Glyph s={18} sw={1.4}><path d="M4 3h2.500a1.700 1.700 0 0 1 3.300 0H13v3.500a1.700 1.700 0 1 0 0 3.200V13.300H9.800a1.700 1.700 0 0 1-3.300 0H4V10a1.800 1.800 0 1 1 0-3.700z" /></Glyph></Cell>
        <Rule />
        <Cell $w={48}><Glyph s={17} vb="0 0 17 17"><path d="M10 5.500L7.500 1.200 5.500 5.700.8 6.200l3.700 3.500-1 5 3.500-2M9.500 5.700h6.500M10.500 9.200H16M10.500 12.700H16" /></Glyph></Cell>
        <Cell $w={44}><Glyph s={18} vb="0 0 18 18" sw={1.3}><path d="M6 .8v12M1.500 8.500L6 13l4-4M1.500 16h5" /><circle cx="13.500" cy="13.500" r="4.300" fill="#1d8a3c" stroke="none" /><path d="M11.500 13.500l1.500 1.500 2.500-2.700" stroke="#fff" /></Glyph></Cell>
        <Cell $w={43}><svg width="22" height="22" viewBox="0 0 22 22"><circle cx="11" cy="11" r="11" fill="#cfcdca" /><circle cx="11" cy="8.300" r="4.800" fill="#8b8885" /><path d="M3.800 19c.5-4 4-4.700 7.200-4.700s6.700.7 7.200 4.700a11 11 0 0 1-14.400 0z" fill="#8b8885" /></svg></Cell>
        <Cell $w={50}><Glyph s={14} sw={2.7}><path d="M1.700 8h.1M8 8h.1M14.200 8h.1" /></Glyph></Cell>
        <Cell $w={33}><CopilotLogo /></Cell>
      </AddressRow>

      <ShareBar>
        <svg width="20" height="16" viewBox="0 0 20 16"><path d="M2.500 0h15c.7 0 1 .4 1 1v11.500h-17V1c0-.6.300-1 1-1zM0 13h20v1.500H0z" fill="#000" /><path d="M6 9.500c.5-3 2-4 4.500-4V3.500L14.500 6.500l-4 3v-2c-2 0-3.500.5-4.500 2z" fill="#fff" /></svg>
        <ShareMessage w={294.5}>A partilhar https://replit.com com meet.google.com</ShareMessage>
        <ShareButton $primary $w={106}><Fit w={73}>Parar partilha</Fit></ShareButton>
        <ShareButton $w={246}><Fit w={213}>Em alternativa, partilhar este separador</Fit></ShareButton>
      </ShareBar>

      <AppCard>
        <AppHeader>
          <Brand>
            <EraserMark w={40} h={16} />
            <Fit w={256.5}>Agendamento24h- FrontOffice</Fit>
          </Brand>
          <Segments>
            <Segment><Fit w={78.5}>Document</Fit></Segment>
            <Segment><Fit w={35.5}>Both</Fit></Segment>
            <Segment $on><Fit w={56.5}>Canvas</Fit></Segment>
          </Segments>
          <HeaderActions>
            <KeyHint><Fit w={36}>Ctrl K</Fit></KeyHint>
            <ShareCta>
              <Fit w={44.5}>Share</Fit>
              <Glyph s={16} sw={1.2}><path d="M6.800 9.200a2.600 2.600 0 0 1 0-3.700l3.600-3.600a2.600 2.600 0 0 1 3.700 3.700l-2.500 2.500M9.200 6.800a2.600 2.600 0 0 1 0 3.700l-3.600 3.600a2.600 2.600 0 0 1-3.700-3.700l2.500-2.500" /></Glyph>
            </ShareCta>
            <CommentButton>
              <svg width="20" height="20" viewBox="0 0 20 20"><path d="M2 1h16a1.500 1.500 0 0 1 1.500 1.500v12A1.500 1.500 0 0 1 18 16h-6l-5 4v-4H2a1.500 1.500 0 0 1-1.500-1.500v-12A1.500 1.500 0 0 1 2 1z" fill="#141414" /></svg>
              <CommentBadge>1</CommentBadge>
            </CommentButton>
            <NotesButton>
              <svg width="19" height="20" viewBox="0 0 19 20" fill="none" stroke="#151515" strokeWidth="1.900"><path d="M7.500 2.500h8.700c1 0 1.600.6 1.600 1.600v12.800c0 1-.6 1.600-1.600 1.600H5.500c-1 0-1.600-.6-1.600-1.600V14" /><path d="M9.500 6.500h5M9.500 10h5M7.500 13.700h7" strokeWidth="1.500" /><path d="M.8 4.700h2.700v5.500M.5 10.300h6M3.400.6v2" /></svg>
            </NotesButton>
          </HeaderActions>
        </AppHeader>

        <Board>
          <Whiteboard />
          <Tools>
            {TOOL_GROUPS.map((group, i) => (
              <ToolGroup key={i}>
                {group.map(([name, key]) => (
                  <Tool key={name} $on={name === "select"}>
                    {name === "text" ? (
                      <TextTool><TextIcon $s={9.5}>T</TextIcon><TextIcon $s={15}>T</TextIcon></TextTool>
                    ) : (
                      TOOL_ICONS[name]
                    )}
                    <ToolKey>{key}</ToolKey>
                  </Tool>
                ))}
              </ToolGroup>
            ))}
          </Tools>
          <ZoomLevel><Fit w={37.5}>150%</Fit><Caret /></ZoomLevel>
          <ScrollThumb $vertical />
          <ScrollThumb />
          <HelpButton>?</HelpButton>
          <SideWidget>
            <svg width="25" height="24" viewBox="0 0 25 24">
              <defs><linearGradient id="brain" x1="0" y1="0" x2="1" y2="1"><stop offset="0" stopColor="#ff8a2b" /><stop offset=".35" stopColor="#e33fd0" /><stop offset=".65" stopColor="#7a4df5" /><stop offset="1" stopColor="#1aa7ff" /></linearGradient></defs>
              <path d="M11.500 2.500v19c0 2.500-5 2.500-6-.5-3 0-4-2.500-3.500-4.500C-.5 15-.5 10.500 1.500 9 .5 6 2.500 4 4.500 3.800 5.500 0 11 0 11.500 2.500zM13.500 2.500v19c0 2.500 5 2.500 6-.5 3 0 4-2.500 3.500-4.500 2.500-1.500 2.500-6 .5-7.500 1-3-1-5-3-5.200-1-3.800-6.500-3.800-7-1.300z" fill="url(#brain)" />
              <path d="M4 8h3l1-2M3 12h8M5 17h3l1 2M16 6l2 3 3-1M15 15h3l2 3" fill="none" stroke="#fff" strokeWidth=".8" />
            </svg>
          </SideWidget>
        </Board>
      </AppCard>
      <SideHandle>
        <Glyph s={9} h={16} vb="0 0 9 16" sw={2} stroke="#aaa"><path d="M9 1L1.500 8 9 15" /></Glyph>
      </SideHandle>

      <Taskbar>
        <WidgetSlot>
          <svg width="24" height="22" viewBox="0 0 24 22"><rect width="24" height="22" rx="2" fill="#0a5cad" /><path d="M2 2h9v18H2z" fill="#f2fbff" /><path d="M13 2h9v9h-9z" fill="#3fc0f6" /><path d="M13 12.500h9V20h-9z" fill="#1f86dc" /></svg>
        </WidgetSlot>
        <TaskCell>
          <svg width="23" height="23" viewBox="0 0 23 23"><defs><linearGradient id="win" x2="1" y2="1"><stop stopColor="#4cc8fb" /><stop offset="1" stopColor="#0873d2" /></linearGradient></defs><path d="M0 0h11v11H0zM12 0h11v11H12zM0 12h11v11H0zM12 12h11v11H12z" fill="url(#win)" /></svg>
        </TaskCell>
        <SearchBox>
          <Glyph s={15} sw={1.6} stroke="#222"><circle cx="9.500" cy="6.500" r="5.500" /><path d="M5.500 10.500L1 15" /></Glyph>
          <SearchText><Fit w={52}>Procurar</Fit></SearchText>
          <Mountain />
        </SearchBox>
        {TASKS.map((t, i) => (
          <TaskCell key={i} $active={t.active} $open={t.open}>
            {t.icon}
            {t.badge && <CountBadge>{t.badge}</CountBadge>}
          </TaskCell>
        ))}
        <Tray>
          <Cell $w={24}><Glyph s={12} sw={1.5}><path d="M1 11.500L8 4l7 7.500" /></Glyph></Cell>
          <Cell $w={25}><Glyph s={17} vb="0 0 17 17" sw={1.2}><path d="M1 7.500A7 7 0 0 1 14 4.500M14.500 1v4h-4M2.500 16v-4h4M3 12.500l3 3" /><circle cx="12" cy="12.500" r="4.200" fill="#fb0606" stroke="none" /></Glyph></Cell>
          <TwoLine $w={43} $align="center"><Fit w={22}>POR</Fit><Fit w={24}>INTL</Fit></TwoLine>
          <Cell $w={31}><Glyph s={17} sw={1.2}><path d="M10 2.500H1.500v9.500H13V9M5 14.800h5M7.500 12v2.800" /><rect x="11.500" y="1" width="4" height="4.500" rx=".5" /><path d="M13.500 5.500V9" /></Glyph></Cell>
          <Cell $w={18}><Glyph s={16} sw={1.1}><path d="M1 6v4h2l3 3V3L3 6zM8.500 6c1 1.200 1 2.800 0 4M10.700 4.200c2 2.300 2 5.300 0 7.600M13 2.500c3 3.300 3 7.700 0 11" /></Glyph></Cell>
          <TwoLine $w={74} $align="flex-end"><Fit w={26}>15:50</Fit><Fit w={59}>13/03/2025</Fit></TwoLine>
          <DayBadge>13</DayBadge>
        </Tray>
      </Taskbar>
    </Screen>
  );
}
